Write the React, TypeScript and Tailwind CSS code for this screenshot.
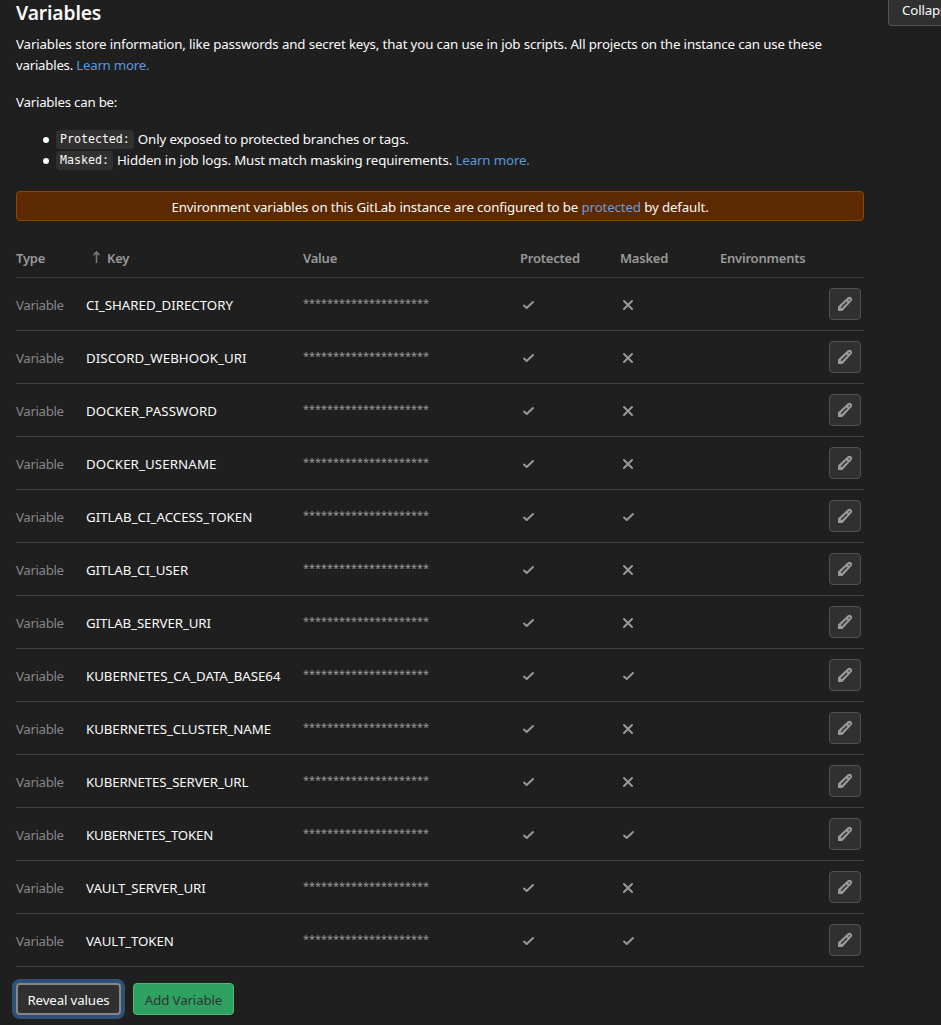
import React from "react";

type Row = { name: string; masked: boolean; tracking: string };

const rows: Row[] = [
  { name: "CI_SHARED_DIRECTORY", masked: false, tracking: "tracking-[-0.02px]" },
  { name: "DISCORD_WEBHOOK_URI", masked: false, tracking: "tracking-[0.05px]" },
  { name: "DOCKER_PASSWORD", masked: false, tracking: "tracking-[0.12px]" },
  { name: "DOCKER_USERNAME", masked: false, tracking: "tracking-[0.1px]" },
  { name: "GITLAB_CI_ACCESS_TOKEN", masked: true, tracking: "tracking-[0px]" },
  { name: "GITLAB_CI_USER", masked: false, tracking: "tracking-[-0.07px]" },
  { name: "GITLAB_SERVER_URI", masked: false, tracking: "tracking-[-0.1px]" },
  { name: "KUBERNETES_CA_DATA_BASE64", masked: true, tracking: "tracking-[-0.04px]" },
  { name: "KUBERNETES_CLUSTER_NAME", masked: false, tracking: "tracking-[-0.09px]" },
  { name: "KUBERNETES_SERVER_URL", masked: false, tracking: "tracking-[-0.14px]" },
  { name: "KUBERNETES_TOKEN", masked: true, tracking: "tracking-[-0.25px]" },
  { name: "VAULT_SERVER_URI", masked: false, tracking: "tracking-[-0.06px]" },
  { name: "VAULT_TOKEN", masked: true, tracking: "tracking-[-0.1px]" },
];

const columns = "grid grid-cols-[70px_217px_217px_100px_100px_1fr_35px]";

function Check() {
  return (
    <svg className="mt-0.5 size-4" viewBox="0 0 16 16" fill="none" stroke="#999" strokeWidth="2" strokeLinecap="round" strokeLinejoin="round">
      <path d="M4 8.6 6.7 11 13 5" />
    </svg>
  );
}

function Cross() {
  return (
    <svg className="mt-0.5 size-4" viewBox="0 0 16 16" fill="none" stroke="#999" strokeWidth="2" strokeLinecap="round">
      <path d="m4 4 8 8M12 4l-8 8" />
    </svg>
  );
}

function Pencil() {
  return (
    <svg className="size-4" viewBox="0 0 16 16" fill="#999" fillRule="evenodd">
      <path d="M1 15v-4.5l9.6-8.9a2.7 2.7 0 0 1 3.7 0 2.7 2.7 0 0 1 0 3.7L5.4 15zM3.7 11.3l1 1 5.8-5.7-1-1zM11.2 4l.9.9 .8-.8a.6.6 0 0 0-.9-.9z" />
    </svg>
  );
}

export default function App() {
  return (
    <main className="h-[1025px] w-[941px] overflow-hidden bg-[#1f1f1f] pl-4 font-['Noto_Sans',sans-serif] text-[13.3px] leading-[21px] tracking-[-0.14px] whitespace-nowrap text-[#fafafa]">
      <header className="flex h-[34px] items-start justify-between">
        <h2 className="text-[19.3px] leading-[26px] font-semibold">Variables</h2>
        <button className="-mr-6 flex h-[26px] w-[77px] items-start rounded-b border border-t-0 border-[#525252] bg-[#303030] pl-[13px] text-left">Collapse</button>
      </header>
      <p>
        Variables store information, like passwords and secret keys, that you can use in job scripts. All projects on the instance can use these
        <br />
        <span className="tracking-[-0.26px]">variables. <a className="text-[#5a97dc]">Learn more.</a></span>
      </p>
      <p className="mt-4 tracking-[-0.24px]">Variables can be:</p>
      <ul className="mt-4">
        {[
          { label: "Protected:", text: "Only exposed to protected branches or tags.", link: false },
          { label: "Masked:", text: "Hidden in job logs. Must match masking requirements. ", link: true },
        ].map((item) => (
          <li key={item.label} className="flex h-[21px] items-center pl-[27px]">
            <span className="mr-[7px] size-1.5 rounded-full bg-[#fafafa]" />
            <code className="h-[19px] rounded bg-[#303030] px-1 font-['DejaVu_Sans_Mono',monospace] text-[11.6px] leading-[19px] tracking-normal">{item.label}</code>
            <span className="ml-1 whitespace-pre">{item.text}{item.link && <a className="text-[#5a97dc]">Learn more.</a>}</span>
          </li>
        ))}
      </ul>
      <section className="w-[848px]">
        <div className="mt-5 flex h-[30px] items-center justify-center rounded border border-[#8f4700] bg-[#5c2900] pt-0.5">
          <p>Environment variables on this GitLab instance are configured to be <a className="text-[#6f9bdb]">protected</a> by default.</p>
        </div>
        <div className={`${columns} mt-[17px] h-10 items-center border-b border-[#393939] pt-0.5 text-[13px] font-semibold tracking-[-0.22px] text-[#999]`}>
          <span>Type</span>
          <span className="flex items-center pl-[5px]">
            <svg className="mr-1 mb-1 h-3.5 w-3" viewBox="0 0 12 14" fill="none" stroke="#777" strokeWidth="1.6"><path d="M5.5 13V2M2.5 5.2l3-3.2 3 3.2" /></svg>
            Key
          </span>
          <span>Value</span><span>Protected</span><span>Masked</span><span>Environments</span>
        </div>
        {rows.map(({ name, masked, tracking }) => (
          <div key={name} className={`${columns} h-[53px] items-center border-b border-[#424242]`}>
            <span className="pt-0.5 tracking-[-0.38px] text-[#868686]">Variable</span>
            <span className={`pt-0.5 ${tracking}`}>{name}</span>
            <span className="pb-1 text-[10.9px] tracking-normal text-[#999]">*********************</span>
            <Check />
            {masked ? <Check /> : <Cross />}
            <span />
            <button aria-label={`Edit ${name}`} className="flex size-8 items-center justify-center rounded border border-[#525252] bg-[#303030]"><Pencil /></button>
          </div>
        ))}
        <div className="mt-4 flex gap-3">
          <button className="h-8 w-[105px] rounded border-2 border-[#868686] bg-[#303030] pt-0.5 ring-4 ring-[#2f5179]">Reveal values</button>
          <button className="h-8 w-[101px] rounded border border-[#52b87a] bg-[#2da160] pt-0.5 text-[#333]">Add Variable</button>
        </div>
      </section>
    </main>
  );
}
